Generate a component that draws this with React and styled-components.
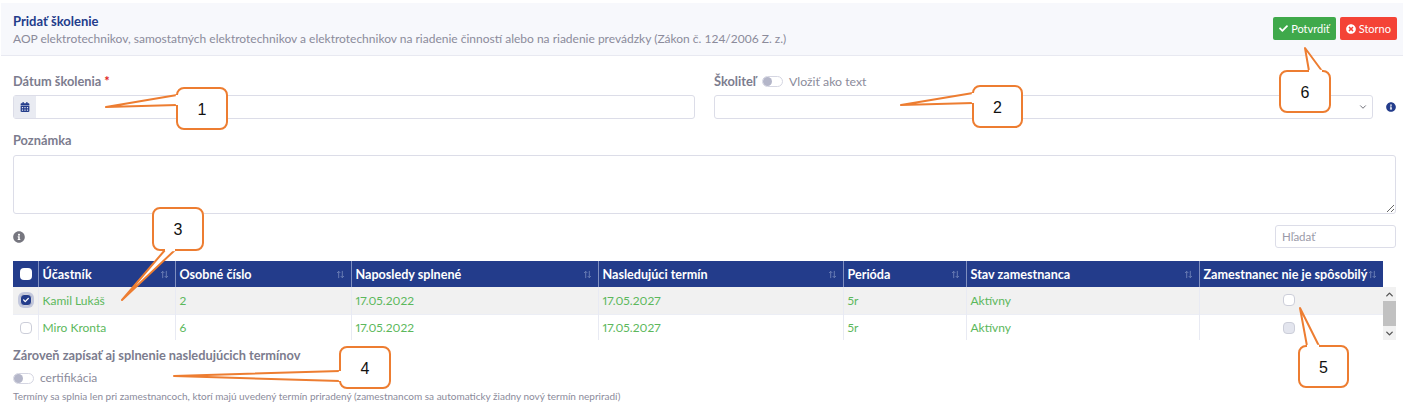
import styled, { createGlobalStyle } from 'styled-components';
import { FaCalendarAlt, FaCheck, FaInfoCircle, FaTimesCircle } from 'react-icons/fa';
import { ChevronDown, ChevronUp } from 'lucide-react';

const GlobalStyle = createGlobalStyle`
	html, body {
		margin: 0;
		background: #fff;
	}
	body {
		font-family: 'Lato', 'Open Sans', sans-serif;
		font-size: 12px;
		color: #7c7c8e;
	}
	* {
		box-sizing: border-box;
	}
`;

const columns = [25, 137, 176, 247, 245, 123, 233, 184];

const headers = [
	'Účastník',
	'Osobné číslo',
	'Naposledy splnené',
	'Nasledujúci termín',
	'Perióda',
	'Stav zamestnanca',
	'Zamestnanec nie je spôsobilý',
];

const rows = [
	{ name: 'Kamil Lukáš', id: '2', last: '17.05.2022', next: '17.05.2027', checked: true, unfit: 'empty' },
	{ name: 'Miro Kronta', id: '6', last: '17.05.2022', next: '17.05.2027', checked: false, unfit: 'disabled' },
];

const callouts = [
	{ n: 1, x: 177, y: 88, w: 50, h: 41, d: 'M177 95 L106 107 L177 105' },
	{ n: 2, x: 973, y: 86, w: 49, h: 41, d: 'M973 93 L901 105 L973 103' },
	{ n: 3, x: 153, y: 208, w: 50, h: 42, d: 'M165 250 L122 300 L175 250' },
	{ n: 4, x: 340, y: 347, w: 50, h: 41, d: 'M340 371 L174 376 L340 381' },
	{ n: 5, x: 1299, y: 346, w: 49, h: 41, d: 'M1307 346 L1300 308 L1319 346' },
	{ n: 6, x: 1280, y: 71, w: 50, h: 41, d: 'M1309 71 L1305 48 L1322 71' },
];

const App = () => {
	return (
		<Page>
			<GlobalStyle />
			<Header>
				<div>
					<Title>Pridať školenie</Title>
					<Subtitle>
						AOP elektrotechnikov, samostatných elektrotechnikov a elektrotechnikov na riadenie činností alebo na
						riadenie prevádzky (Zákon č. 124/2006 Z. z.)
					</Subtitle>
				</div>
				<HeaderButtons>
					<ActionButton $bg='#3fa94b'>
						<FaCheck size={9} /> Potvrdiť
					</ActionButton>
					<ActionButton $bg='#f44336'>
						<FaTimesCircle size={10} /> Storno
					</ActionButton>
				</HeaderButtons>
			</Header>

			<Form>
				<TopFields>
					<Field>
						<Label>
							Dátum školenia <Required>*</Required>
						</Label>
						<InputGroup>
							<InputAddon>
								<FaCalendarAlt size={10} />
							</InputAddon>
						</InputGroup>
					</Field>
					<Field>
						<LabelRow>
							<Label>Školiteľ</Label>
							<Toggle />
							<ToggleText>Vložiť ako text</ToggleText>
						</LabelRow>
						<SelectRow>
							<SelectBox>
								<ChevronDown size={10} color='#55555f' strokeWidth={2} />
							</SelectBox>
							<FaInfoCircle size={12} color='#233c8b' />
						</SelectRow>
					</Field>
				</TopFields>

				<NoteField>
					<Label>Poznámka</Label>
					<NoteArea />
				</NoteField>

				<TableTools>
					<FaInfoCircle size={12} color='#76767f' />
					<Search placeholder='Hľadať' />
				</TableTools>

				<Table>
					<colgroup>
						{columns.map((w, i) => (
							<col key={i} style={{ width: w }} />
						))}
					</colgroup>
					<thead>
						<tr>
							<Th $center>
								<HeadCheck />
							</Th>
							{headers.map((h) => (
								<Th key={h}>
									{h}
									<SortIcon viewBox='0 0 10 10'>
										<path d='M3 9V1.5M1.2 3.3 3 1.5l1.8 1.8M7 1v7.5M5.2 6.7 7 8.5l1.8-1.8' />
									</SortIcon>
								</Th>
							))}
						</tr>
					</thead>
				</Table>
				<TableBodyWrap>
					<Table>
						<colgroup>
							{columns.map((w, i) => (
								<col key={i} style={{ width: w }} />
							))}
						</colgroup>
						<tbody>
							{rows.map((r) => (
								<Row key={r.name} $odd={r.checked}>
									<CheckCell>
										<RowCheck $checked={r.checked}>{r.checked && <FaCheck size={6} color='#fff' />}</RowCheck>
									</CheckCell>
									<Td>{r.name}</Td>
									<Td>{r.id}</Td>
									<Td>{r.last}</Td>
									<Td>{r.next}</Td>
									<Td>5r</Td>
									<Td>Aktívny</Td>
									<UnfitCell>
										<RowCheck $muted={r.unfit === 'disabled'} />
									</UnfitCell>
								</Row>
							))}
						</tbody>
					</Table>
					<Scrollbar>
						<ScrollArrow>
							<ChevronUp size={11} strokeWidth={3} color='#555' />
						</ScrollArrow>
						<ScrollThumb />
						<ScrollArrow>
							<ChevronDown size={11} strokeWidth={3} color='#555' />
						</ScrollArrow>
					</Scrollbar>
				</TableBodyWrap>

				<BottomLabel>Zároveň zapísať aj splnenie nasledujúcich termínov</BottomLabel>
				<CertRow>
					<Toggle />
					<span>certifikácia</span>
				</CertRow>
				<HelpText>
					Termíny sa splnia len pri zamestnancoch, ktorí majú uvedený termín priradený (zamestnancom sa automaticky žiadny
					nový termín nepriradí)
				</HelpText>
			</Form>

			<Annotations viewBox='0 0 1403 406'>
				{callouts.map((c) => (
					<g key={c.n}>
						<rect x={c.x} y={c.y} width={c.w} height={c.h} rx='7' fill='#fff' stroke='#ed7d31' strokeWidth='2' />
						<path d={c.d} fill='#fff' stroke='#ed7d31' strokeWidth='2' strokeLinejoin='round' />
						<CalloutPatch c={c} />
						<CalloutNumber x={c.x + c.w / 2} y={c.y + c.h / 2 + 6}>
							{c.n}
						</CalloutNumber>
					</g>
				))}
			</Annotations>
		</Page>
	);
};

// hides the box border where the tail joins it
const CalloutPatch = ({ c }) => {
	const pts = c.d.replace(/[ML]/g, '').trim().split(/\s+/).map(Number);
	return <line x1={pts[0]} y1={pts[1]} x2={pts[4]} y2={pts[5]} stroke='#fff' strokeWidth='2.4' />;
};

export default App;

const Page = styled.div`
	position: relative;
	width: 1403px;
	height: 406px;
	padding-top: 3px;
	overflow: hidden;
`;

const Header = styled.div`
	display: flex;
	justify-content: space-between;
	height: 53px;
	margin-left: 1px;
	padding: 10px 6px 0 12px;
	background: #f7f8fc;
	border-bottom: 1px solid #e8e9f1;
`;

const Title = styled.div`
	font-size: 13px;
	font-weight: 700;
	line-height: 16px;
	color: #233c8b;
`;

const Subtitle = styled.div`
	margin-top: 2px;
	font-size: 12px;
	line-height: 16px;
	color: #8b8b9b;
`;

const HeaderButtons = styled.div`
	display: flex;
	gap: 4px;
	padding-top: 4px;
`;

const ActionButton = styled.button`
	display: flex;
	align-items: center;
	gap: 3px;
	height: 23px;
	padding: 0 6px;
	border: 0;
	border-radius: 2px;
	background: ${(p) => p.$bg};
	color: #fff;
	font-family: inherit;
	font-size: 11px;
`;

const Form = styled.div`
	padding: 16px 7px 0 13px;
`;

const TopFields = styled.div`
	display: grid;
	grid-template-columns: 682px 682px;
	column-gap: 19px;
`;

const Field = styled.div`
	display: flex;
	flex-direction: column;
`;

const Label = styled.label`
	font-size: 12.8px;
	font-weight: 700;
	line-height: 18px;
	color: #7c7c8e;
`;

const Required = styled.span`
	color: #e01b1b;
`;

const LabelRow = styled.div`
	display: flex;
	align-items: center;
	gap: 6px;
	height: 18px;
`;

const ToggleText = styled.span`
	font-size: 12.3px;
	color: #8b8b9b;
`;

const Toggle = styled.span`
	position: relative;
	display: inline-block;
	width: 21px;
	height: 11px;
	border: 1px solid #d5d6e2;
	border-radius: 6px;
	background: #fff;
	&::before {
		content: '';
		position: absolute;
		left: 0;
		top: 0;
		width: 9px;
		height: 9px;
		border-radius: 50%;
		background: #b4b6c9;
	}
`;

const InputGroup = styled.div`
	display: flex;
	height: 24px;
	margin-top: 5px;
	border: 1px solid #dcdde8;
	border-radius: 3px;
	background: #fff;
`;

const InputAddon = styled.div`
	display: flex;
	align-items: center;
	justify-content: center;
	width: 22px;
	background: #e9ebf2;
	color: #233c8b;
`;

const SelectRow = styled.div`
	display: flex;
	align-items: center;
	gap: 13px;
	margin-top: 5px;
`;

const SelectBox = styled.div`
	display: flex;
	flex: 0 0 659px;
	align-items: center;
	justify-content: flex-end;
	height: 24px;
	padding-right: 4px;
	border: 1px solid #dcdde8;
	border-radius: 3px;
`;

const NoteField = styled.div`
	display: flex;
	flex-direction: column;
	margin-top: 12px;
`;

const NoteArea = styled.textarea`
	width: 1383px;
	height: 59px;
	margin-top: 6px;
	border: 1px solid #dcdde8;
	border-radius: 3px;
`;

const TableTools = styled.div`
	display: flex;
	align-items: center;
	justify-content: space-between;
	height: 23px;
	margin-top: 11px;
	margin-bottom: 13px;
`;

const Search = styled.input`
	width: 121px;
	height: 23px;
	padding: 0 6px;
	border: 1px solid #dcdde8;
	border-radius: 3px;
	font-family: inherit;
	font-size: 11.5px;
	&::placeholder {
		color: #9a9aa8;
	}
`;

const Table = styled.table`
	width: 1370px;
	border-collapse: collapse;
	table-layout: fixed;
	flex: 0 0 1370px;
`;

const Th = styled.th`
	position: relative;
	height: 26px;
	padding: 1px 3px 0 4px;
	border-right: 1px solid #7f8fc0;
	background: #233c8b;
	color: #fff;
	font-size: 12.6px;
	font-weight: 700;
	text-align: ${(p) => (p.$center ? 'center' : 'left')};
	white-space: nowrap;
	overflow: hidden;
	&:last-child {
		border-right: 0;
	}
`;

const SortIcon = styled.svg`
	position: absolute;
	right: 6px;
	top: 9px;
	width: 9px;
	height: 9px;
	fill: none;
	stroke: #7183b8;
	stroke-width: 1;
`;

const HeadCheck = styled.span`
	display: block;
	width: 12px;
	height: 12px;
	margin: 0 auto 2px;
	border-radius: 4px;
	background: #fff;
`;

const TableBodyWrap = styled.div`
	display: flex;
	height: 53px;
	overflow: hidden;
`;

const Row = styled.tr`
	background: ${(p) => (p.$odd ? '#f1f1f1' : '#fff')};
	border-bottom: 1px solid #eceef5;
`;

const Td = styled.td`
	height: 27px;
	padding: 0 4px;
	border-right: 1px solid #e8eaf3;
	color: #5cb85c;
	font-size: 12px;
	font-variant-numeric: proportional-nums;
`;

const CheckCell = styled.td`
	height: 27px;
	padding: 0 3px 0 5px;
	border-right: 1px solid #e8eaf3;
`;

const UnfitCell = styled.td`
	height: 27px;
	padding: 0 9px 0 4px;
`;

const RowCheck = styled.span`
	display: flex;
	align-items: center;
	justify-content: center;
	width: 12px;
	height: 12px;
	margin: 0 auto;
	border: 1px solid #ccced9;
	border-radius: 4px;
	background: ${(p) => (p.$checked ? '#233c8b' : p.$muted ? '#e3e5ee' : '#fff')};
	box-shadow: ${(p) => (p.$checked ? '0 0 0 2px #c3c8dd' : 'none')};
`;

const Scrollbar = styled.div`
	display: flex;
	flex-direction: column;
	width: 13px;
	height: 53px;
	background: #f1f1f1;
`;

const ScrollArrow = styled.div`
	display: flex;
	align-items: center;
	justify-content: center;
	height: 14px;
`;

const ScrollThumb = styled.div`
	width: 13px;
	height: 25px;
	background: #c1c1c1;
`;

const BottomLabel = styled.div`
	margin-top: 6px;
	font-size: 12.8px;
	font-weight: 700;
	line-height: 18px;
	color: #7c7c8e;
`;

const CertRow = styled.div`
	display: flex;
	align-items: center;
	gap: 6px;
	margin-top: 6px;
	line-height: 16px;
	color: #8b8b9b;
`;

const HelpText = styled.div`
	margin-top: 3px;
	font-size: 10px;
	line-height: 14px;
	color: #8b8b9b;
`;

const Annotations = styled.svg`
	position: absolute;
	left: 0;
	top: 0;
	width: 1403px;
	height: 406px;
	pointer-events: none;
`;

const CalloutNumber = styled.text`
	font-family: 'Liberation Sans', Arial, sans-serif;
	font-size: 16px;
	fill: #111;
	text-anchor: middle;
`;
